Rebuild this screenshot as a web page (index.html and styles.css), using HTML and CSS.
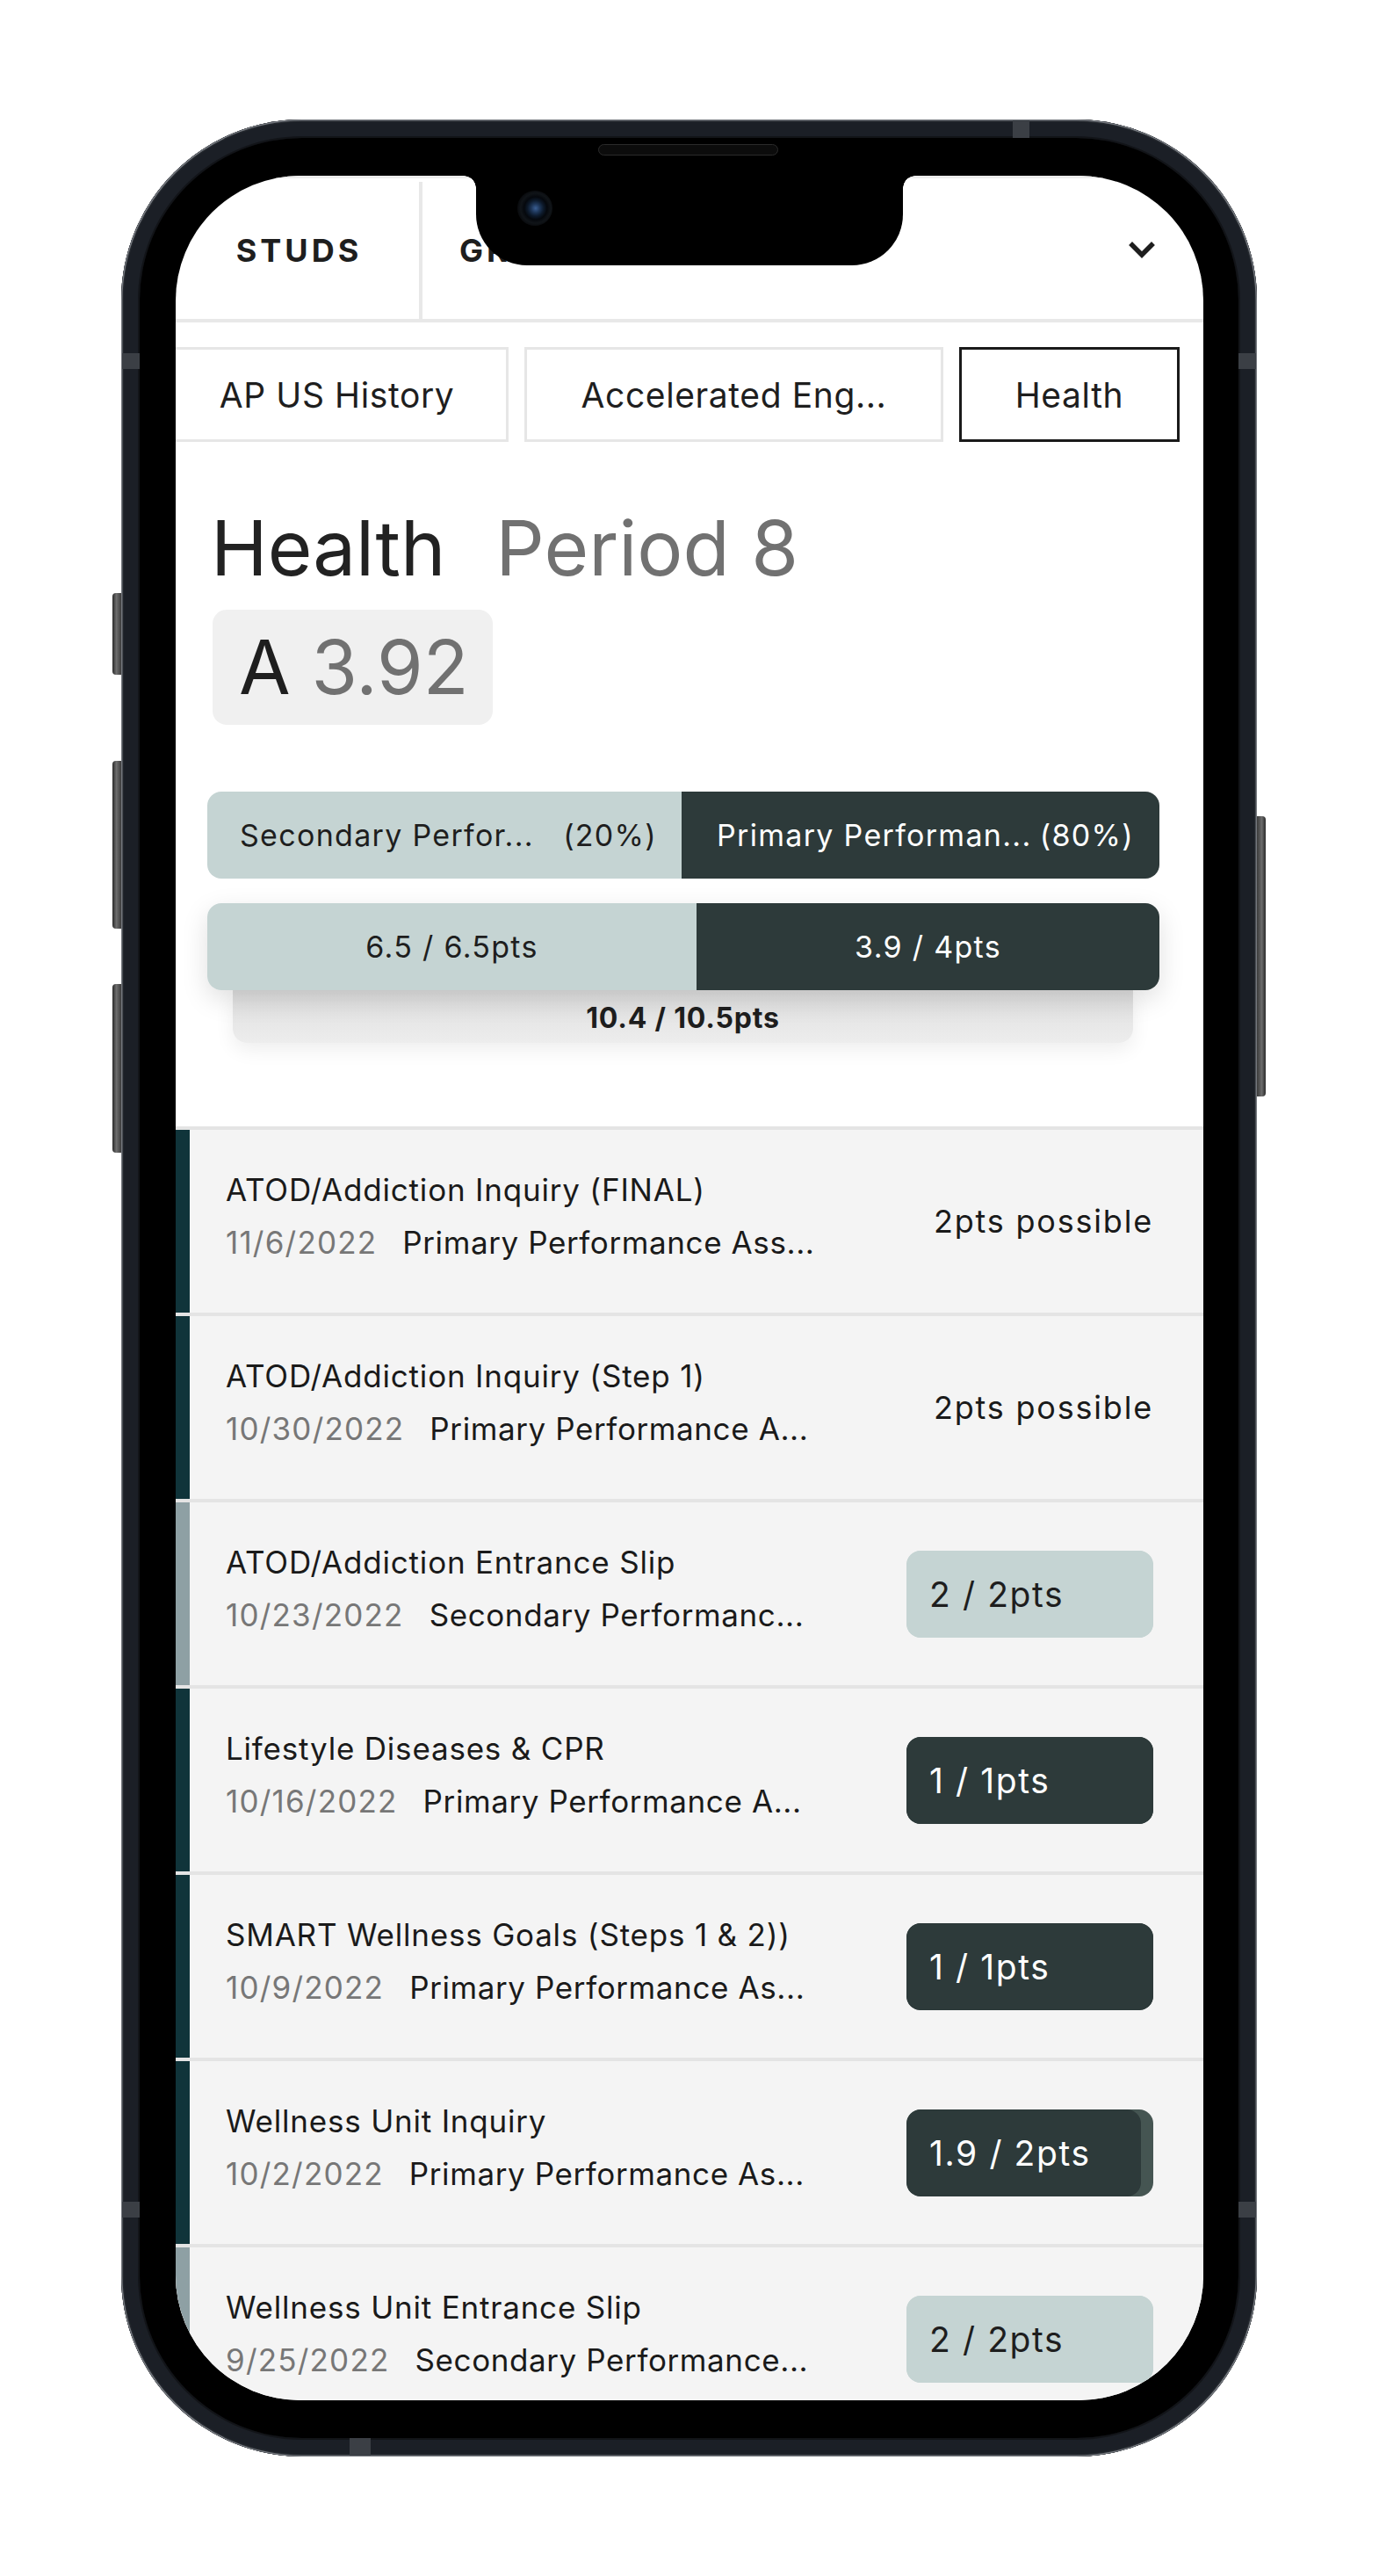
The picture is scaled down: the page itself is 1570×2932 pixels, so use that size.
FILE: index.html
```html
<!DOCTYPE html>
<html lang="en">
<head>
<meta charset="utf-8">
<title>Health – Grades</title>
<link rel="stylesheet" href="styles.css">
</head>
<body>
<div class="page">
  <div class="phone">
    <span class="hw-btn left b1"></span>
    <span class="hw-btn left b2"></span>
    <span class="hw-btn left b3"></span>
    <span class="hw-btn right b4"></span>
    <span class="ant ant-top"></span>
    <span class="ant ant-bottom"></span>
    <span class="ant ant-l1"></span>
    <span class="ant ant-r1"></span>
    <span class="ant ant-l2"></span>
    <span class="ant ant-r2"></span>
    <div class="bezel">
      <span class="speaker"></span>
      <div class="screen">
        <div class="notch"><span class="cam"></span></div>

        <header class="topnav">
          <div class="navtab studs">STUDS</div>
          <div class="navtab grades">GRADES</div>
          <svg class="chev" width="30" height="20" viewBox="0 0 30 20" aria-hidden="true">
            <polyline points="4,4 15,15 26,4" fill="none" stroke="#1e1e1e" stroke-width="5.5" stroke-linecap="square" stroke-linejoin="miter"/>
          </svg>
        </header>

        <nav class="classtabs">
          <div class="ctab t1">AP US History</div>
          <div class="ctab t2">Accelerated Eng...</div>
          <div class="ctab t3 active">Health</div>
        </nav>

        <section class="summary">
          <h1 class="title"><span>Health</span><span class="period">Period 8</span></h1>
          <div class="grade"><span class="letter">A</span> <span class="gpa">3.92</span></div>

          <div class="weights">
            <div class="wseg sec"><span class="wlabel">Secondary Perfor...</span><span>(20%)</span></div>
            <div class="wseg pri"><span class="wlabel">Primary Performan...</span><span>(80%)</span></div>
          </div>

          <div class="points-wrap">
            <div class="points">
              <div class="pseg sec">6.5 / 6.5pts</div>
              <div class="pseg pri">3.9 / 4pts</div>
            </div>
            <div class="total">10.4 / 10.5pts</div>
          </div>
        </section>

        <ul class="list">
          <li class="row pri">
            <div class="row-in">
              <div class="info">
                <div class="name">ATOD/Addiction Inquiry (FINAL)</div>
                <div class="meta"><span class="date">11/6/2022</span><span class="cat">Primary Performance Ass...</span></div>
              </div>
              <div class="possible">2pts possible</div>
            </div>
          </li>
          <li class="row pri">
            <div class="row-in">
              <div class="info">
                <div class="name">ATOD/Addiction Inquiry (Step 1)</div>
                <div class="meta"><span class="date">10/30/2022</span><span class="cat">Primary Performance A...</span></div>
              </div>
              <div class="possible">2pts possible</div>
            </div>
          </li>
          <li class="row sec">
            <div class="row-in">
              <div class="info">
                <div class="name">ATOD/Addiction Entrance Slip</div>
                <div class="meta"><span class="date">10/23/2022</span><span class="cat">Secondary Performanc...</span></div>
              </div>
              <div class="badge light"><div class="fill full">2 / 2pts</div></div>
            </div>
          </li>
          <li class="row pri">
            <div class="row-in">
              <div class="info">
                <div class="name">Lifestyle Diseases &amp; CPR</div>
                <div class="meta"><span class="date">10/16/2022</span><span class="cat">Primary Performance A...</span></div>
              </div>
              <div class="badge dark"><div class="fill full">1 / 1pts</div></div>
            </div>
          </li>
          <li class="row pri">
            <div class="row-in">
              <div class="info">
                <div class="name">SMART Wellness Goals (Steps 1 &amp; 2))</div>
                <div class="meta"><span class="date">10/9/2022</span><span class="cat">Primary Performance As...</span></div>
              </div>
              <div class="badge dark"><div class="fill full">1 / 1pts</div></div>
            </div>
          </li>
          <li class="row pri">
            <div class="row-in">
              <div class="info">
                <div class="name">Wellness Unit Inquiry</div>
                <div class="meta"><span class="date">10/2/2022</span><span class="cat">Primary Performance As...</span></div>
              </div>
              <div class="badge dark partial"><div class="fill" style="width:95%">1.9 / 2pts</div></div>
            </div>
          </li>
          <li class="row sec">
            <div class="row-in">
              <div class="info">
                <div class="name">Wellness Unit Entrance Slip</div>
                <div class="meta"><span class="date">9/25/2022</span><span class="cat">Secondary Performance...</span></div>
              </div>
              <div class="badge light"><div class="fill full">2 / 2pts</div></div>
            </div>
          </li>
        </ul>
      </div>
    </div>
  </div>
</div>
</body>
</html>
```

FILE: styles.css
```css
* {
  box-sizing: border-box;
  margin: 0;
  padding: 0;
}

html, body {
  background: #ffffff;
}

body {
  font-family: Inter, "Noto Sans", "Liberation Sans", sans-serif;
  color: #1e1e1e;
}

.page {
  width: 1570px;
  height: 2932px;
  padding: 136px 0 0 138px;
  overflow: hidden;
}

/* ---------- phone hardware ---------- */
.phone {
  position: relative;
  width: 1293px;
  height: 2660px;
  border-radius: 206px;
  padding: 21px;
  background: #1b1f26;
  box-shadow: inset 0 0 0 1.5px #74787e, inset 0 0 0 3px #23272d, inset 0 0 0 19px #1b1f26, inset 0 0 0 21px #121418;
}

.hw-btn {
  position: absolute;
  width: 10px;
  background: linear-gradient(90deg, #2a2a2a 0%, #6e6e6e 45%, #3c3c3c 100%);
}
.hw-btn.left { left: -10px; border-radius: 4px 0 0 4px; }
.hw-btn.right { right: -10px; border-radius: 0 4px 4px 0; background: linear-gradient(90deg, #3c3c3c 0%, #6a6a6a 55%, #2a2a2a 100%); }
.b1 { top: 539px; height: 93px; }
.b2 { top: 730px; height: 191px; }
.b3 { top: 984px; height: 192px; }
.b4 { top: 793px; height: 319px; }

.ant {
  position: absolute;
  background: #3b3f45;
}
.ant-top { top: 1px; left: 1015px; width: 19px; height: 20px; }
.ant-bottom { bottom: 1px; left: 260px; width: 24px; height: 20px; }
.ant-l1 { left: 1px; top: 266px; width: 20px; height: 18px; }
.ant-r1 { right: 1px; top: 266px; width: 20px; height: 18px; }
.ant-l2 { left: 1px; top: 2370px; width: 20px; height: 18px; }
.ant-r2 { right: 1px; top: 2370px; width: 20px; height: 18px; }

.bezel {
  position: relative;
  height: 100%;
  border-radius: 185px;
  background: #000;
  padding: 43px 40px 43px 41px;
}

.speaker {
  position: absolute;
  left: 522px;
  top: 7px;
  width: 205px;
  height: 13px;
  border-radius: 7px;
  background: #0c0c0c;
  border: 1.5px solid #2b2b2b;
}

.screen {
  position: relative;
  width: 1170px;
  height: 2532px;
  border-radius: 142px;
  overflow: hidden;
  background: #ffffff;
}

.notch {
  position: absolute;
  left: 342px;
  top: 0;
  width: 486px;
  height: 102px;
  background: #000;
  border-radius: 0 0 58px 58px;
  z-index: 5;
}
.notch::before,
.notch::after {
  content: "";
  position: absolute;
  top: 0;
  width: 14px;
  height: 14px;
}
.notch::before {
  left: -14px;
  background: radial-gradient(circle at 0 100%, transparent 13.5px, #000 14px);
}
.notch::after {
  right: -14px;
  background: radial-gradient(circle at 100% 100%, transparent 13.5px, #000 14px);
}

.cam {
  position: absolute;
  left: 47px;
  top: 17px;
  width: 40px;
  height: 40px;
  border-radius: 50%;
  background: radial-gradient(circle at 52% 50%, #3b5f93 0, #1d3557 5px, #0d1a2b 9px, #05080d 13px, #101418 17px, #0a0c0f 20px);
}

/* ---------- top nav ---------- */
.topnav {
  display: flex;
  height: 167px;
  padding-top: 4px;
  border-top: 3px solid #ededed;
  border-bottom: 4px solid #e8e8e8;
}

.navtab {
  display: flex;
  align-items: center;
  font-size: 36px;
  font-weight: 700;
  letter-spacing: 4px;
  color: #1e1e1e;
}
.navtab.studs {
  width: 281px;
  justify-content: center;
  padding-left: 4px;
  border-right: 4px solid #e8e8e8;
}
.navtab.grades {
  padding-left: 42px;
}
.chev {
  margin-left: auto;
  margin-right: 55px;
  align-self: center;
}

/* ---------- class tabs ---------- */
.classtabs {
  display: flex;
  gap: 18px;
  margin: 28px 0 0 -12px;
}
.ctab {
  flex: none;
  height: 108px;
  border: 3px solid #e6e6e6;
  display: flex;
  align-items: center;
  justify-content: center;
  font-size: 39px;
  letter-spacing: 0.6px;
  color: #1e1e1e;
  white-space: nowrap;
}
.ctab.t1 { width: 391px; }
.ctab.t2 { width: 477px; }
.ctab.t3 { width: 251px; }
.ctab.active { border-color: #1a1a1a; }

/* ---------- summary ---------- */
.summary {
  padding-left: 42px;
}

.title {
  display: flex;
  gap: 57px;
  margin: 71px 0 0 -2px;
  font-size: 87px;
  line-height: 100px;
  font-weight: 400;
  color: #222;
}
.period { color: #717171; }

.grade {
  width: max-content;
  margin-top: 20px;
  padding: 0 27px 0 30px;
  background: #f0f0f0;
  border-radius: 16px;
  font-size: 85px;
  line-height: 131px;
  color: #1e1e1e;
}
.gpa { color: #717171; }

.weights {
  display: flex;
  width: 1084px;
  height: 99px;
  margin: 76px 0 0 -6px;
  border-radius: 16px;
  overflow: hidden;
}
.wseg {
  display: flex;
  align-items: center;
  justify-content: space-between;
  font-size: 34px;
  letter-spacing: 1.3px;
  white-space: nowrap;
}
.wseg.sec {
  width: 540px;
  padding: 0 28px 0 37px;
  background: #c5d4d3;
  color: #1e1e1e;
}
.wseg.pri {
  flex: 1;
  padding: 0 29px 0 40px;
  background: #2d3a3a;
  color: #ffffff;
}

.points-wrap {
  width: 1084px;
  margin: 28px 0 0 -6px;
}
.points {
  position: relative;
  z-index: 1;
  display: flex;
  height: 99px;
  border-radius: 16px;
  overflow: hidden;
  box-shadow: 0 10px 30px rgba(0, 0, 0, 0.13);
}
.pseg {
  display: flex;
  align-items: center;
  justify-content: center;
  font-size: 34px;
  letter-spacing: 1.3px;
}
.pseg.sec {
  width: 557px;
  background: #c5d4d3;
  color: #1e1e1e;
}
.pseg.pri {
  flex: 1;
  background: #2d3a3a;
  color: #ffffff;
}
.total {
  height: 60px;
  margin: 0 30px 0 29px;
  padding-top: 3px;
  display: flex;
  align-items: center;
  justify-content: center;
  background: linear-gradient(#dedede, #ededed);
  border-radius: 0 0 16px 16px;
  box-shadow: 0 8px 22px rgba(0, 0, 0, 0.07);
  font-size: 32px;
  font-weight: 700;
  letter-spacing: 0.8px;
  color: #1e1e1e;
}

/* ---------- assignment list ---------- */
.list {
  list-style: none;
  margin-top: 95px;
}
.row {
  border-top: 4px solid #e4e4e4;
}
.row-in {
  display: flex;
  align-items: center;
  height: 208px;
  padding: 0 57px 0 41px;
  background: #f4f4f4;
  border-left: 16px solid #10343a;
}
.row.sec .row-in {
  border-left-color: #8ea0a4;
}
.info {
  flex: 1;
  min-width: 0;
  padding-bottom: 12px;
}
.name,
.meta {
  font-size: 35px;
  line-height: 60px;
  letter-spacing: 0.8px;
  white-space: nowrap;
  color: #1a1a1a;
}
.meta {
  letter-spacing: 0.6px;
}
.date {
  color: #777777;
  margin-right: 29px;
  letter-spacing: 1.2px;
}
.possible {
  font-size: 36px;
  letter-spacing: 1.8px;
  color: #1a1a1a;
}
.badge {
  display: flex;
  width: 281px;
  height: 99px;
  border-radius: 16px;
  overflow: hidden;
  font-size: 39px;
  letter-spacing: 1.6px;
}
.badge.light { background: #c5d4d3; color: #1e1e1e; }
.badge.dark { background: #2d3a3a; color: #ffffff; }
.badge.partial { background: #455552; }
.fill {
  display: flex;
  align-items: center;
  height: 100%;
  padding-left: 26px;
  border-radius: 16px;
  white-space: nowrap;
}
.fill.full { width: 100%; }
.badge.dark .fill { background: #2d3a3a; }
.badge.light .fill { background: #c5d4d3; }
```
